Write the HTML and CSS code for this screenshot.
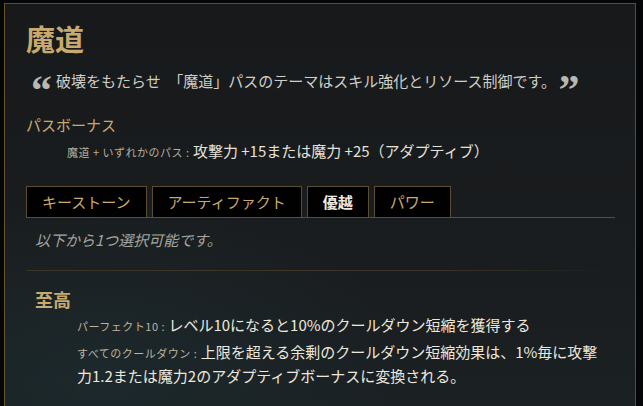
FILE: index.html
```html
<!DOCTYPE html>
<html lang="ja">
<head>
<meta charset="utf-8">
<link rel="stylesheet" href="styles.css">
</head>
<body>
<div class="frame">
  <h1 class="title">魔道</h1>
  <p class="quote"><span class="qmark open">“</span>破壊をもたらせ　「魔道」パスのテーマはスキル強化とリソース制御です。<span class="qmark close">”</span></p>
  <h2 class="bonus-head">パスボーナス</h2>
  <p class="bonus"><span class="label">魔道 + いずれかのパス :</span> 攻撃力 +15または魔力 +25（アダプティブ）</p>
  <div class="tabs">
    <div class="tab">キーストーン</div>
    <div class="tab">アーティファクト</div>
    <div class="tab active">優越</div>
    <div class="tab">パワー</div>
  </div>
  <p class="hint">以下から1つ選択可能です。</p>
  <div class="sep"></div>
  <h3 class="rune">至高</h3>
  <p class="entry"><span class="elabel">パーフェクト10 :</span> レベル10になると10%のクールダウン短縮を獲得する</p>
  <p class="entry"><span class="elabel">すべてのクールダウン :</span> 上限を超える余剰のクールダウン短縮効果は、1%毎に攻撃力1.2または魔力2のアダプティブボーナスに変換される。</p>
</div>
</body>
</html>
```
FILE: styles.css
```css
html, body {
  margin: 0;
  padding: 0;
  background: #050607;
  height: 406px;
  overflow: hidden;
}
body {
  font-family: "Noto Sans CJK JP", "Noto Sans", sans-serif;
  padding: 3px 7px 0 4px;
}
.frame {
  border: 1px solid #5b4d31;
  border-bottom: none;
  border-left-color: #6b5527;
  height: 420px;
  padding: 16px 20px 0 21px;
  background:
    radial-gradient(ellipse 70% 60% at 15% 85%, rgba(30, 48, 52, 0.55), rgba(30, 48, 52, 0) 70%),
    linear-gradient(180deg, #17191b 0%, #1a1d1f 60%, #1b2124 100%);
}
.title {
  margin: 0;
  font-size: 29px;
  line-height: 36px;
  font-weight: 700;
  color: #c8aa6e;
}
.quote {
  margin: 14px 0 0 0;
  padding-left: 5px;
  font-size: 15px;
  line-height: 22px;
  color: #cfcfc8;
  white-space: nowrap;
}
.qmark {
  font-family: "Liberation Serif", serif;
  font-weight: 700;
  font-size: 42px;
  line-height: 0;
  color: #b8b8b2;
  vertical-align: -17px;
}
.qmark.open { margin-right: 4px; }
.qmark.close { margin-left: 10px; }
.bonus-head {
  margin: 23px 0 0 0;
  font-size: 15px;
  line-height: 20px;
  font-weight: 400;
  color: #c8aa6e;
}
.bonus {
  margin: 6px 0 0 0;
  padding-left: 41px;
  font-size: 15px;
  line-height: 20px;
  color: #e6e2d8;
  white-space: nowrap;
}
.label {
  font-size: 11px;
  line-height: 1;
  letter-spacing: 0.5px;
  color: #b5ae9c;
}
.tabs {
  margin-top: 25px;
  display: flex;
  gap: 5px;
  border-bottom: 1px solid #5b4d31;
}
.tab {
  background: #010101;
  border: 1px solid #5b4d31;
  border-bottom: none;
  padding: 0 15px;
  font-size: 15px;
  line-height: 30px;
  color: #c8aa6e;
}
.tab.active {
  color: #f0ebe0;
  font-weight: 700;
}
.hint {
  margin: 12px 0 0 0;
  padding-left: 9px;
  font-size: 15px;
  line-height: 20px;
  font-style: italic;
  color: #a7a59f;
}
.sep {
  margin-top: 20px;
  height: 1px;
  background: linear-gradient(90deg, #3c3628 0%, #3a3427 70%, rgba(58, 52, 39, 0) 100%);
}
.rune {
  margin: 16px 0 0 0;
  padding-left: 9px;
  font-size: 18px;
  line-height: 24px;
  font-weight: 700;
  color: #c8aa6e;
}
.entry {
  margin: 2px 0 0 0;
  padding: 0 8px 0 51px;
  font-size: 15px;
  line-height: 24px;
  color: #ece8de;
}
.entry + .entry { margin-top: 3px; }
.elabel {
  font-size: 11px;
  line-height: 1;
  letter-spacing: 0.5px;
  color: #bfb49a;
}
```
